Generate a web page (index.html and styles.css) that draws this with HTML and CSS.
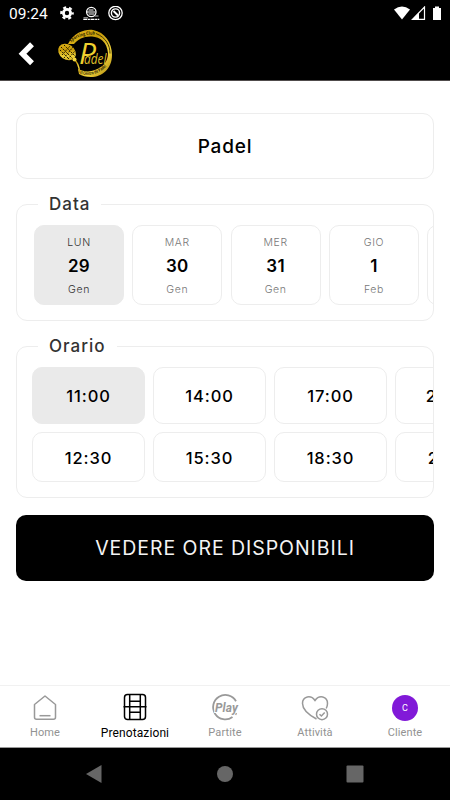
FILE: index.html
```html
<!DOCTYPE html>
<html lang="it">
<head>
  <meta charset="UTF-8">
  <meta name="viewport" content="width=device-width, initial-scale=1.0">
  <title>Prenotazioni - Padel</title>
  <link rel="stylesheet" href="styles.css">
</head>
<body>

  <header class="header">
    <div class="status-bar">
      <span class="clock">09:24</span>
      <svg class="status-left" width="64" height="16" viewBox="0 0 64 16">
        <!-- impostazioni -->
        <circle cx="7" cy="7" r="3.6" fill="none" stroke="#fff" stroke-width="2.8"/>
        <circle cx="7" cy="7" r="5.7" fill="none" stroke="#fff" stroke-width="2.2" stroke-dasharray="2.98 2.98" stroke-dashoffset="1.5"/>
        <!-- notifica club -->
        <circle cx="31.3" cy="6" r="4.7" fill="none" stroke="#fff" stroke-width="1.3"/>
        <path d="M27 6h8M28.5 4h5M28.5 8h6" stroke="#fff" stroke-width="1.2"/>
        <path d="M23.5 11.8h4.5M34.5 10h4" stroke="#bbb" stroke-width="1"/>
        <path d="M23.3 13.3h16" stroke="#fff" stroke-width="1.3" stroke-dasharray="4 .6 2 .6"/>
        <!-- notifica -->
        <circle cx="55.5" cy="7" r="6.7" fill="none" stroke="#fff" stroke-width="1.3"/>
        <circle cx="55.5" cy="7" r="4.1" fill="none" stroke="#fff" stroke-width="1.4"/>
        <path d="M53.5 5l4.500 4.500" stroke="#fff" stroke-width="2"/>
      </svg>
      <svg class="status-right" width="50" height="16" viewBox="0 0 50 16">
        <path d="M2 3.500Q10 -2.500 18 3.500L10 13.500z" fill="#fff"/>
        <path d="M20.500 13.300L32.500 1v12.300z" fill="none" stroke="#fff" stroke-width="1.200"/>
        <path d="M19.500 14L27 6.500V14z" fill="#fff"/>
        <path d="M41 2h2V.500h4V2h2v12h-8z" fill="#fff"/>
      </svg>
    </div>
    <div class="title-bar">
      <svg class="back" width="18" height="24" viewBox="0 0 18 24">
        <path d="M15 2.300L5.500 11.800l9.500 9.500" fill="none" stroke="#fff" stroke-width="5.500"/>
      </svg>
      <svg class="logo" width="56" height="50" viewBox="0 0 56 50">
        <defs>
          <linearGradient id="gold" x1="0" y1="0" x2="1" y2="1">
            <stop offset="0" stop-color="#e5bd20"/>
            <stop offset=".4" stop-color="#c79a08"/>
            <stop offset=".7" stop-color="#f0d43c"/>
            <stop offset="1" stop-color="#a77c06"/>
          </linearGradient>
          <path id="arc-top" d="M13 13.500Q21 5 39 5.500"/>
          <path id="arc-bottom" d="M22 45Q38 49 50 36"/>
        </defs>
        <path d="M10 15C16 3 28 0 35 1c12 2 19 13 19 25 0 14-10 22-21 22-5 0-9-1-12-3l-1-5c6 3 12 3 17 1 8-3 13-8 13-17C49 13 42 8 34 7.500c-8-.5-14 2.500-18 7.500z" fill="url(#gold)"/>
        <path d="M38 4.500c10 4 14 12 14 20" fill="none" stroke="#211900" stroke-width=".8"/>
        <ellipse cx="9" cy="23" rx="9.500" ry="7.500" transform="rotate(35 9 23)" fill="url(#gold)"/>
        <path d="M3 18l12 12M6 16l11 11M2 21l9 9M4 26l8-9M6 29l9-11M10 30l7-8" stroke="#1c1500" stroke-width="1" stroke-dasharray="1.500 1"/>
        <path d="M15 29c4 3 6 8 7 15" fill="none" stroke="url(#gold)" stroke-width="1.500"/>
        <circle cx="16.500" cy="30.500" r="2" fill="#f4d63d"/>
        <text class="logo-arc"><textPath href="#arc-top" textLength="26" lengthAdjust="spacingAndGlyphs">Sporting Club</textPath></text>
        <text class="logo-arc"><textPath href="#arc-bottom" textLength="29" lengthAdjust="spacingAndGlyphs">Il Centro de Padel</textPath></text>
        <text class="logo-p" x="21" y="34.500">P</text>
        <text class="logo-adel" x="26" y="34.500" textLength="22.500" lengthAdjust="spacingAndGlyphs">adel</text>
      </svg>
    </div>
  </header>

  <main class="content">
    <div class="sport">Padel</div>

    <fieldset class="group">
      <legend>Data</legend>
      <div class="scroller days">
        <div class="day selected"><span>LUN</span><b>29</b><span>Gen</span></div>
        <div class="day"><span>MAR</span><b>30</b><span>Gen</span></div>
        <div class="day"><span>MER</span><b>31</b><span>Gen</span></div>
        <div class="day"><span>GIO</span><b>1</b><span>Feb</span></div>
        <div class="day"></div>
      </div>
    </fieldset>

    <fieldset class="group">
      <legend>Orario</legend>
      <div class="scroller slots">
        <div class="slot selected">11:00</div>
        <div class="slot">14:00</div>
        <div class="slot">17:00</div>
        <div class="slot">20:00</div>
        <div class="slot">12:30</div>
        <div class="slot">15:30</div>
        <div class="slot">18:30</div>
        <div class="slot">21:30</div>
      </div>
    </fieldset>

    <button class="submit">VEDERE ORE DISPONIBILI</button>
  </main>

  <nav class="tabs">
    <a class="tab">
      <svg width="30" height="30" viewBox="0 0 30 30" fill="none" stroke="#999" stroke-width="1.500">
        <path d="M4.500 11.500L15 3l10.500 8.500v12.800q0 2-2 2h-17q-2 0-2-2z" stroke-linejoin="round"/>
        <path d="M9.500 22.700h11"/>
      </svg>
      <span>Home</span>
    </a>
    <a class="tab active">
      <svg width="30" height="30" viewBox="0 0 30 30" fill="none" stroke="#000" stroke-width="1.500">
        <rect x="4.500" y="1.500" width="21" height="25" rx="3"/>
        <path d="M9.700 1.500v25M20.300 1.500v25M9.700 8.200h10.600M9.700 19.300h10.600M3.500 13.800h23"/>
      </svg>
      <span>Prenotazioni</span>
    </a>
    <a class="tab">
      <svg width="30" height="30" viewBox="0 0 30 30" fill="none" stroke="#999" stroke-width="1.800">
        <path d="M26 8.200A12.200 12.200 0 1 0 22.500 24M26.300 20l-1 1.800"/>
        <text class="play" x="5" y="18.500" textLength="23" lengthAdjust="spacingAndGlyphs">Play</text>
      </svg>
      <span>Partite</span>
    </a>
    <a class="tab">
      <svg width="30" height="30" viewBox="0 0 30 30" fill="none" stroke="#999" stroke-width="1.500">
        <path d="M16.500 26C10 22.500 2.500 17 2.500 10.500 2.500 3 11 1.500 15 7.500c4-6 12.500-4.500 12.500 3 0 2-.5 3.500-1.300 5"/>
        <circle cx="22" cy="21.200" r="5.500"/>
        <path d="M19.500 21.200l1.900 1.800 3.300-3.400"/>
      </svg>
      <span>Attività</span>
    </a>
    <a class="tab">
      <div class="avatar">C</div>
      <span>Cliente</span>
    </a>
  </nav>

  <div class="system-nav">
    <svg width="18" height="20" viewBox="0 0 18 20"><path d="M0 10L15.500 1v18z"/></svg>
    <svg width="18" height="20" viewBox="0 0 18 20"><circle cx="9" cy="10" r="8"/></svg>
    <svg width="18" height="20" viewBox="0 0 18 20"><rect x=".5" y="1.500" width="17" height="17" rx="1"/></svg>
  </div>

</body>
</html>
```
FILE: styles.css
```css
* {
  box-sizing: border-box;
}

body {
  margin: 0;
  height: 800px;
  display: flex;
  flex-direction: column;
  overflow: hidden;
  background: #fff;
  color: #000;
  font-family: Inter, "Liberation Sans", sans-serif;
}

svg {
  display: block;
}

/* header */

.header {
  height: 81px;
  background: #000;
  border-bottom: 1px solid #504c4c;
}

.status-bar {
  height: 28px;
  padding: 6px 8px 0 9px;
  display: flex;
  align-items: flex-start;
  color: #fff;
}

.clock {
  width: 51px;
  font: 15.5px/16px Roboto, sans-serif;
}

.status-right {
  margin-left: auto;
}

.title-bar {
  display: flex;
  align-items: center;
  padding: 1px 0 0 17px;
  gap: 23px;
}

.logo {
  overflow: visible;
}

.logo-arc {
  font: bold 4.5px "Open Sans", sans-serif;
  fill: #2b2100;
}

.logo-p {
  font: italic 30px "Open Sans", sans-serif;
  fill: #efd02f;
}

.logo-adel {
  font: italic 15px "Open Sans", sans-serif;
  fill: #dfbd29;
}

/* contenuto */

.content {
  flex: 1;
  padding: 32px 16px 0;
}

.sport {
  height: 66px;
  margin-bottom: 16px;
  border: 1px solid #ededed;
  border-radius: 11px;
  font-size: 19px;
  font-weight: 500;
  line-height: 65px;
  letter-spacing: .8px;
  text-align: center;
}

.group {
  min-width: 0;
  margin: 0 0 16px;
  padding: 0;
  border: 1px solid #ededed;
  border-radius: 11px;
}

.group legend {
  margin-left: 21px;
  padding: 0 11px;
  color: #333;
  font-size: 17px;
  font-weight: 500;
  line-height: 18px;
  letter-spacing: 1px;
}

.scroller {
  padding: 12px 0 15px;
  overflow: hidden;
}

.selected.selected {
  background: #eaeaea;
  border-color: #eaeaea;
}

.days {
  display: flex;
  gap: 8.3px;
  padding-left: 17px;
}

.day {
  flex: 0 0 90px;
  height: 80px;
  padding-top: 9px;
  border: 1px solid #ededed;
  border-radius: 10px;
  display: flex;
  flex-direction: column;
  align-items: center;
  color: #777;
  font-size: 10.5px;
  font-weight: 300;
  line-height: 15px;
  letter-spacing: .6px;
}

.day b {
  margin: 5px 0;
  color: #000;
  font-size: 17px;
  font-weight: 600;
  line-height: 22px;
  letter-spacing: .3px;
}

.day.selected {
  color: #333;
}

.slots {
  display: grid;
  grid-template-columns: repeat(4, 113px);
  grid-template-rows: 57px 50px;
  gap: 8px;
  padding-left: 15px;
}

.slot {
  border: 1px solid #ededed;
  border-radius: 10px;
  display: flex;
  align-items: center;
  justify-content: center;
  padding-top: 1px;
  font-size: 16.5px;
  font-weight: 500;
  letter-spacing: .9px;
}

.submit {
  display: block;
  width: 100%;
  height: 66px;
  margin-top: 17px;
  border: 0;
  border-radius: 10px;
  background: #000;
  color: #f4f4f4;
  font-family: inherit;
  font-size: 19.5px;
  letter-spacing: .95px;
}

/* tab in basso */

.tabs {
  height: 63px;
  display: flex;
  border-top: 1px solid #f1f1f1;
  border-bottom: 1px solid #999;
}

.tab {
  flex: 1;
  display: flex;
  flex-direction: column;
  align-items: center;
  padding-top: 7px;
  color: #929292;
  font: 11px/14px Roboto, sans-serif;
  letter-spacing: .1px;
}

.tab span {
  margin-top: 3px;
}

.tab.active {
  color: #000;
  font-size: 12px;
}

.play {
  font: italic bold 12.5px Roboto, sans-serif;
  fill: #999;
  stroke: #fff;
  stroke-width: 2px;
  paint-order: stroke;
}

.avatar {
  width: 26px;
  height: 26px;
  margin: 2px 0;
  border-radius: 50%;
  background: #8119d8;
  color: #fff;
  font-size: 9px;
  line-height: 26px;
  text-align: center;
}

/* barra di sistema */

.system-nav {
  height: 52px;
  background: #000;
  display: flex;
  align-items: center;
  justify-content: center;
  gap: 112px;
  fill: #666;
}
```
